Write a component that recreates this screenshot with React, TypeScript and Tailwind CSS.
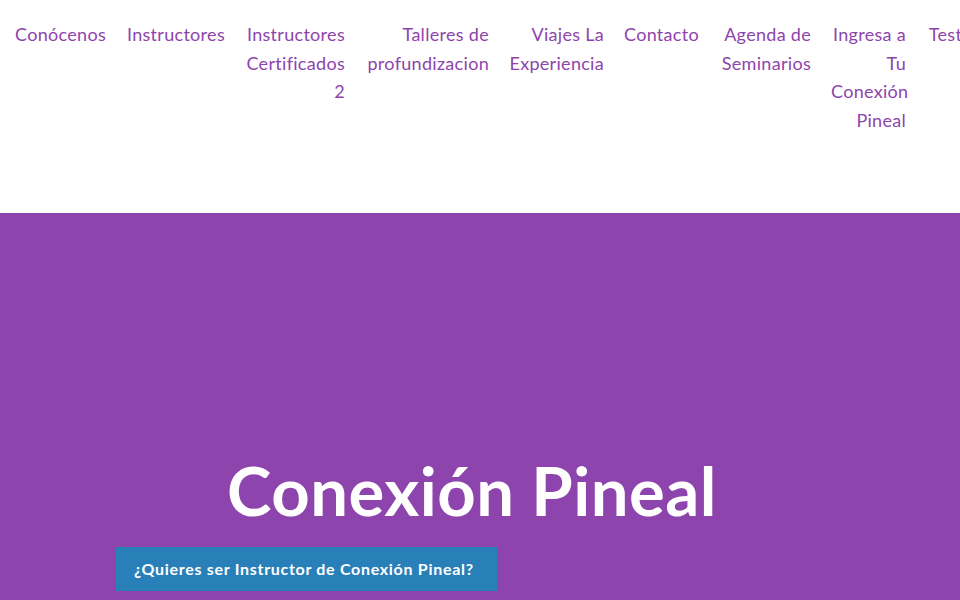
import React from "react";

// nav entries, broken into the lines the header shows
const navItems: { lines: string[]; width: string }[] = [
  { lines: ["Conócenos"], width: "w-[90px]" },
  { lines: ["Instructores"], width: "w-[100px]" },
  { lines: ["Instructores", "Certificados", "2"], width: "w-[100px]" },
  { lines: ["Talleres de", "profundizacion"], width: "w-[124px]" },
  { lines: ["Viajes La", "Experiencia"], width: "w-[95px]" },
  { lines: ["Contacto"], width: "w-[73px]" },
  { lines: ["Agenda de", "Seminarios"], width: "w-[94px]" },
  { lines: ["Ingresa a", "Tu", "Conexión", "Pineal"], width: "w-[75px]" },
  { lines: ["Testimonios"], width: "w-[100px]" },
];

const App: React.FC = () => {
  return (
    <div className="h-[600px] w-[960px] overflow-hidden bg-white font-['Lato','Liberation_Sans',sans-serif]">
      {/* Header nav */}
      <header className="h-[213px] overflow-hidden bg-white">
        <nav className="flex gap-[20px] whitespace-nowrap pl-[15px] pt-[20px]">
          {navItems.map((item, i) => (
            <a
              key={i}
              href="#"
              className={`${item.width} shrink-0 text-right text-[18px] leading-[28.7px] tracking-[0.3px] text-[#8e44ad]`}
            >
              {item.lines.map((line, j) => (
                <div key={j}>{line}</div>
              ))}
            </a>
          ))}
        </nav>
      </header>

      {/* Hero */}
      <section className="h-[387px] bg-[#8e44ad]">
        <div className="mx-auto flex w-[728px] flex-col pt-[237px]">
          <h1 className="pr-[16px] text-center text-[67px] font-bold leading-[80px] tracking-[0.5px] text-white">
            Conexión Pineal
          </h1>
          <div className="mt-[17px]">
            <a
              href="#"
              className="inline-flex h-[44px] w-[381px] items-center bg-[#2980b9] px-[18px] text-[16px] font-bold tracking-[0.7px] text-white"
            >
              ¿Quieres ser Instructor de Conexión Pineal?
            </a>
          </div>
        </div>
      </section>
    </div>
  );
};

export default App;
